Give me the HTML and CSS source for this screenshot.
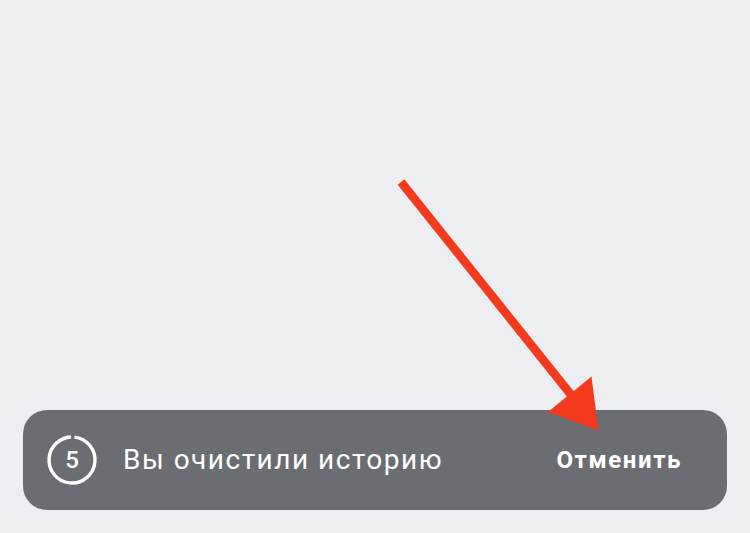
FILE: index.html
```html
<!DOCTYPE html>
<html lang="ru">
<head>
<meta charset="utf-8">
<link rel="stylesheet" href="styles.css">
</head>
<body>
<div class="screen">
  <div class="spacer"></div>
  <div class="snackbar">
    <div class="timer">
      <svg class="ring" width="52" height="52" viewBox="0 0 52 52">
        <circle cx="26" cy="26" r="23" fill="none" stroke="#ffffff" stroke-width="3.4" stroke-dasharray="140 4.5" transform="rotate(-84 26 26)"/>
      </svg>
      <span class="count">5</span>
    </div>
    <span class="message">Вы очистили историю</span>
    <span class="action">Отменить</span>
  </div>
  <svg class="arrow" width="750" height="533" viewBox="0 0 750 533">
    <line x1="401" y1="182" x2="572" y2="396" stroke="#f23a1c" stroke-width="8.5" stroke-linecap="butt"/>
    <polygon points="591.5,376.5 548,412 598.5,430.5" fill="#f23a1c"/>
  </svg>
</div>
</body>
</html>
```
FILE: styles.css
```css
html, body {
  margin: 0;
  padding: 0;
}
body {
  background: #edeef2;
  font-family: Roboto, "Noto Sans", "Liberation Sans", sans-serif;
}
.screen {
  position: relative;
  width: 750px;
  height: 533px;
  display: flex;
  flex-direction: column;
  box-sizing: border-box;
  padding: 0 23px 23px 23px;
}
.spacer {
  flex: 1;
}
.snackbar {
  height: 100px;
  background: #6b6d72;
  border-radius: 24px;
  display: flex;
  align-items: center;
  padding: 0 45px 0 23px;
  color: #ffffff;
}
.timer {
  position: relative;
  width: 52px;
  height: 52px;
  display: flex;
  align-items: center;
  justify-content: center;
  flex: none;
}
.ring {
  position: absolute;
  left: 0;
  top: 0;
}
.count {
  font-size: 24px;
  font-weight: 500;
  line-height: 1;
}
.message {
  margin-left: 25px;
  font-size: 28px;
  letter-spacing: 1.5px;
  flex: 1;
  line-height: 1;
}
.action {
  font-size: 24px;
  font-weight: 700;
  letter-spacing: 1.6px;
  line-height: 1;
}
.arrow {
  position: absolute;
  left: 0;
  top: 0;
  pointer-events: none;
}
```
